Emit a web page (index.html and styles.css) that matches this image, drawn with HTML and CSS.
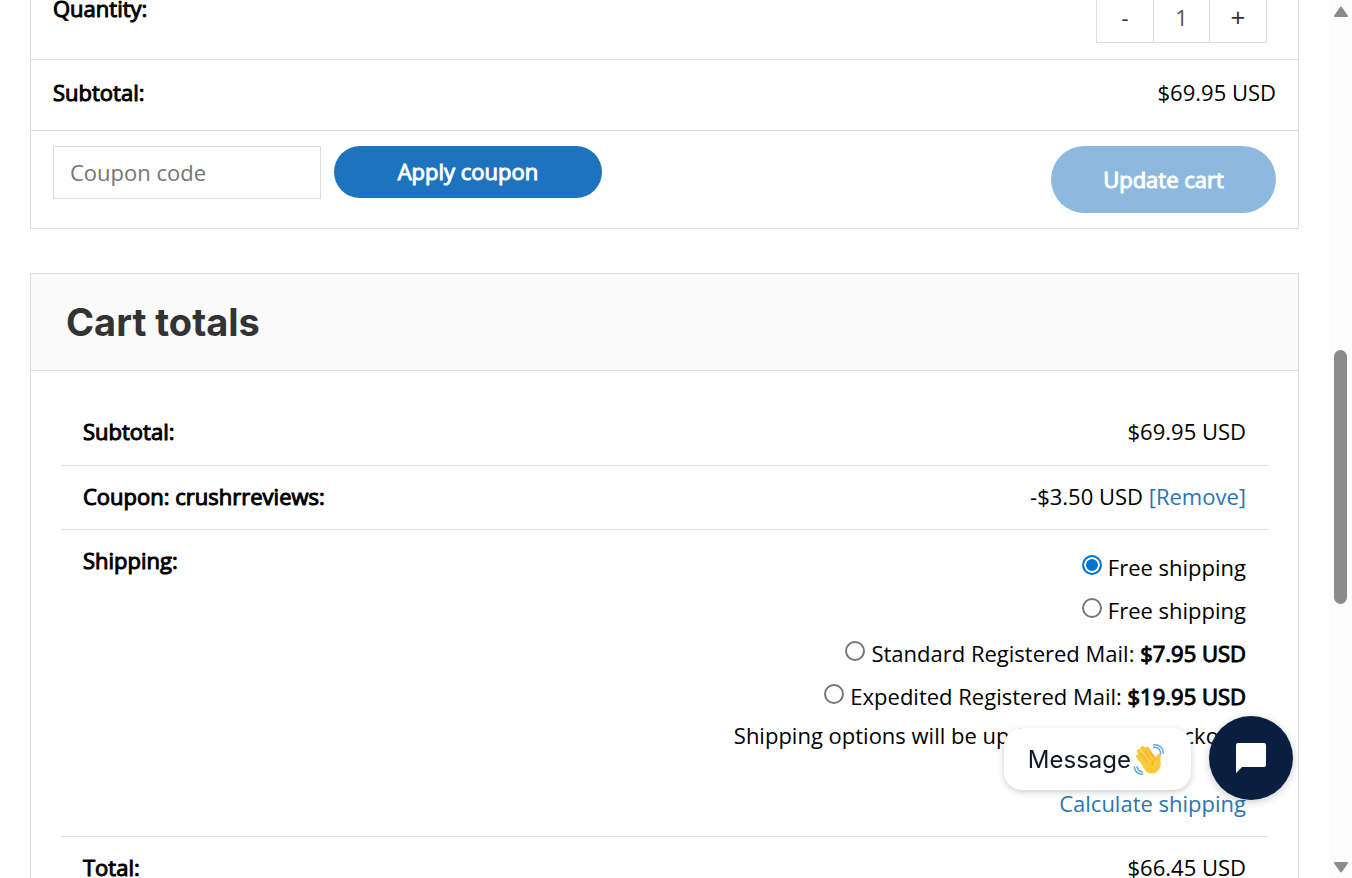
FILE: index.html
```html
<!DOCTYPE html>
<html lang="en">
<head>
<meta charset="utf-8">
<title>Cart</title>
<link rel="stylesheet" href="styles.css">
</head>
<body>
<div class="viewport">
  <main class="page">
    <form class="cart">
      <div class="cart-row quantity-row">
        <label class="strong quantity-label" for="qty">Quantity:</label>
        <div class="stepper">
          <button type="button" aria-label="Decrease">-</button>
          <input id="qty" type="text" value="1">
          <button class="plus" type="button" aria-label="Increase">+</button>
        </div>
      </div>
      <div class="cart-row subtotal-row">
        <span class="strong">Subtotal:</span>
        <span>$69.95 USD</span>
      </div>
      <div class="cart-row actions-row">
        <div class="coupon">
          <input class="coupon-code" type="text" placeholder="Coupon code" aria-label="Coupon code">
          <button class="button apply" type="button">Apply coupon</button>
        </div>
        <button class="button update" type="button" disabled>Update cart</button>
      </div>
    </form>

    <section class="totals">
      <h2>Cart totals</h2>
      <div class="totals-body">
        <table>
          <tbody>
            <tr class="first"><th class="strong" scope="row">Subtotal:</th><td>$69.95 USD</td></tr>
            <tr><th class="strong" scope="row">Coupon: crushrreviews:</th><td>-$3.50 USD <a href="#">[Remove]</a></td></tr>
            <tr class="shipping">
              <th class="strong" scope="row">Shipping:</th>
              <td>
                <ul>
                  <li><input type="radio" name="ship" id="s1" checked><label for="s1">Free shipping</label></li>
                  <li><input type="radio" name="ship" id="s2"><label for="s2">Free shipping</label></li>
                  <li><input type="radio" name="ship" id="s3"><label for="s3">Standard Registered Mail: <span class="strong">$7.95 USD</span></label></li>
                  <li><input type="radio" name="ship" id="s4"><label for="s4">Expedited Registered Mail: <span class="strong">$19.95 USD</span></label></li>
                </ul>
                <p>Shipping options will be updated during checkout.</p>
                <a class="calculate" href="#">Calculate shipping</a>
              </td>
            </tr>
            <tr><th class="strong" scope="row">Total:</th><td>$66.45 USD</td></tr>
          </tbody>
        </table>
      </div>
    </section>
  </main>

  <div class="scrollbar" aria-hidden="true">
    <svg width="16" height="12" viewBox="0 0 16 12"><path d="M8 1.5 14 10H2Z" fill="#8b8b8b" stroke="#8b8b8b" stroke-width="2" stroke-linejoin="round"/></svg>
    <div class="track"><div class="thumb"></div></div>
    <svg width="16" height="12" viewBox="0 0 16 12"><path d="M8 10.5 14 2H2Z" fill="#8b8b8b" stroke="#8b8b8b" stroke-width="2" stroke-linejoin="round"/></svg>
  </div>
</div>

<div class="chat">
  <button class="chat-message" type="button">Message<svg width="32" height="32" viewBox="0 0 32 32" aria-hidden="true">
    <g fill="none" stroke="#f9c83a" stroke-linecap="round">
      <path d="M5.2 12.4 13.5 23" stroke-width="4.4"/>
      <path d="M6 7.3 15 19" stroke-width="4.4"/>
      <path d="M9.5 4.3 19 17" stroke-width="4.4"/>
      <path d="M14 4.6 22 16" stroke-width="4.2"/>
      <path d="M26.2 11.5c-1.8 2.5-.4 5-.6 7.5" stroke-width="4"/>
    </g>
    <path d="M6.5 15 21.5 11.5c2 2 4.5 2.5 5.6 5.8 1.6 5-.7 9.6-4.7 11.4-4.200 1.800-8 .8-10.800-3Z" fill="#fccb3c"/>
    <path d="m7.800 9.700 6.200 8M11.200 6.700l6.600 9M15.500 6l5.500 7.600M23.600 14.800c-3.500 1.200-4.700 3.200-4.300 6" fill="none" stroke="#e9a52b" stroke-width=".8" stroke-linecap="round"/>
    <path d="M20.500 3.300c4.200-.5 6.900 2 7.200 6.300M20.700.9c6-.5 9.300 2.800 9.700 8.300M1.300 23c.8 4.600 3.600 7.100 8.300 7.300M4 22.700c.7 2.900 2.500 4.700 5.300 5.200" fill="none" stroke="#5da9e8" stroke-width="1.500" stroke-linecap="round"/>
  </svg></button>
  <button class="chat-open" type="button" aria-label="Open chat"><svg width="30" height="30" viewBox="0 0 30 30"><path d="M2 0H28a2 2 0 0 1 2 2V22a2 2 0 0 1-2 2H6L0 30V2A2 2 0 0 1 2 0Z" fill="#fff"/></svg></button>
</div>
</body>
</html>
```
FILE: styles.css
```css
* { box-sizing: border-box; }

body {
  margin: 0;
  overflow: hidden;
  background: #fff;
  color: #000;
  font: 22px/30px "Open Sans", sans-serif;
}

input, button { font: inherit; }
a { color: #2a76b0; text-decoration: none; }

.strong {
  font-weight: 400;
  -webkit-text-stroke: 1px currentColor;
}

.viewport { display: flex; height: 100vh; overflow: hidden; }
.page { flex: 1; padding: 0 30px; }

.cart { border: 1px solid #dcdcdc; border-top: 0; margin-bottom: 44px; }
.cart-row {
  display: flex;
  justify-content: space-between;
  align-items: flex-start;
  padding: 0 22px;
}
.cart-row + .cart-row { border-top: 1px solid #dcdcdc; }
.quantity-row { padding: 0 31px 16px 22px; }
.quantity-label { line-height: 16px; }
.subtotal-row { padding-top: 17px; padding-bottom: 23px; }
.actions-row { padding-top: 15px; padding-bottom: 15px; }

.stepper { display: flex; border: 1px solid #dcdcdc; border-top: 0; }
.stepper button, .stepper input {
  width: 56px;
  height: 42px;
  padding: 0 0 8px;
  border: 0;
  background: #fff;
  color: #555;
  text-align: center;
}
.stepper button { color: #333; }
.stepper .plus { font-size: 26px; }
.stepper input { border: solid #dcdcdc; border-width: 0 1px; width: 57px; }

.coupon { display: flex; gap: 13px; }
.coupon-code {
  width: 268px;
  height: 53px;
  padding: 0 16px 2px;
  border: 1px solid #dcdcdc;
  background: #fff;
}
.coupon-code::placeholder { color: #757575; opacity: 1; }
.button {
  padding: 0 0 2px;
  border: 0;
  border-radius: 34px;
  background: #1e73be;
  color: #fff;
  -webkit-text-stroke: 1px currentColor;
}
.apply { width: 268px; height: 52px; }
.update { width: 225px; height: 67px; background: #8eb9de; }

.totals { border: 1px solid #dcdcdc; }
.totals h2 {
  margin: 0;
  padding: 24px 35px;
  border-bottom: 1px solid #dcdcdc;
  background: #fafafa;
  color: #333;
  font: 700 38px/48px Inter, sans-serif;
}
.totals-body { padding: 30px; }
.totals table { width: 100%; border-collapse: separate; border-spacing: 0; }
.totals th, .totals td {
  padding: 15px 22px 18px;
  border-bottom: 1px solid #dcdcdc;
  vertical-align: top;
}
.totals .first th, .totals .first td { padding-bottom: 19px; }
.totals th { text-align: left; }
.totals td { text-align: right; }

.totals ul { margin: 0; padding: 0 0 3px; list-style: none; }
.totals li {
  display: flex;
  justify-content: flex-end;
  align-items: center;
  gap: 6px;
  height: 43px;
}
.totals input[type="radio"] {
  appearance: none;
  width: 20px;
  height: 20px;
  margin: 0 0 3px;
  border: 2px solid #767676;
  border-radius: 50%;
  background: #fff;
}
.totals input[type="radio"]:checked {
  border-color: #0075d0;
  background: #0075d0;
  box-shadow: inset 0 0 0 2px #fff;
}
.totals p { margin: 0 0 38px; }
.calculate { display: block; }

.scrollbar {
  display: flex;
  flex-direction: column;
  align-items: center;
  width: 23px;
  padding: 6px 0 5px;
  background: #fcfcfc;
}
.track { flex: 1; padding-top: 332px; }
.thumb { width: 13px; height: 254px; border-radius: 7px; background: #8b8b8b; }

.chat {
  position: fixed;
  right: 59px;
  bottom: 78px;
  display: flex;
  align-items: center;
  gap: 18px;
}
.chat-message {
  display: flex;
  align-items: center;
  gap: 2px;
  height: 62px;
  margin-top: 2px;
  padding: 2px 26px 0 24px;
  border: 0;
  border-radius: 18px;
  background: #fff;
  box-shadow: 0 2px 6px rgba(0, 0, 0, 0.2);
  color: #111827;
  font: 24px/30px Inter, sans-serif;
}
.chat-open {
  display: grid;
  place-items: center;
  width: 84px;
  height: 84px;
  padding: 0;
  border: 0;
  border-radius: 50%;
  background: #0a1f3f;
  box-shadow: 0 2px 8px rgba(0, 0, 0, 0.2);
}
```
